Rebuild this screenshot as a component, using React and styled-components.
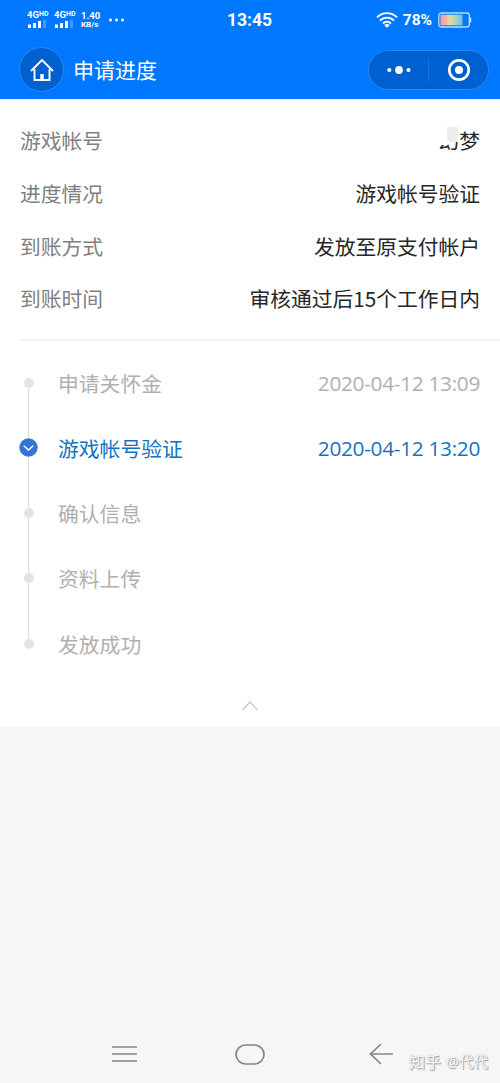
import React from 'react';
import styled, { createGlobalStyle } from 'styled-components';

const GlobalStyle = createGlobalStyle`
  * {
    box-sizing: border-box;
  }

  body {
    margin: 0;
    background: #f6f6f6;
    font-family: "Open Sans", "Noto Sans CJK SC", sans-serif;
  }

  svg {
    display: block;
    flex: none;
  }
`

const StyledPage = styled.div`
  display: flex;
  flex-direction: column;
  width: 500px;
  height: 1083px;
  overflow: hidden;
  background: #f6f6f6;
`

const StyledHeader = styled.header`
  height: 99px;
  color: #fff;
  background: #0077ff;
`

const StyledStatusBar = styled.div`
  display: grid;
  grid-template-columns: 1fr auto 1fr;
  align-items: center;
  height: 40px;
  padding: 0 28px 0 27px;
  font-family: Roboto, sans-serif;
  font-weight: 700;
`

const StyledStatusGroup = styled.div`
  display: flex;
  align-items: center;
  justify-content: ${props => props.$end ? 'flex-end' : 'flex-start'};
`

const StyledSim = styled.div`
  width: 22px;
  margin-right: 5px;
  padding-bottom: 2px;
  font-size: 9.5px;
  line-height: 10px;
  white-space: nowrap;

  small {
    font-size: 7px;
    line-height: 1px;
    vertical-align: 2px;
  }
`

const StyledSpeed = styled.div`
  width: 21px;
  margin-right: 6px;
  font-size: 9.5px;
  line-height: 9px;
  white-space: nowrap;

  div {
    font-size: 8px;
  }
`

const StyledClock = styled.div`
  font-size: 17.5px;
  line-height: 20px;
`

const StyledPercent = styled.div`
  margin: 0 6px 0 5px;
  font-size: 15.5px;
  line-height: 18px;
`

const StyledNav = styled.div`
  display: flex;
  align-items: center;
  height: 59px;
  padding: 0 11px 0 19px;
`

const StyledHome = styled.div`
  display: flex;
  align-items: center;
  justify-content: center;
  width: 45px;
  height: 45px;
  border: 1px solid #288cf8;
  border-radius: 50%;
  background: #0060d0;
`

const StyledTitle = styled.div`
  flex: 1;
  padding-left: 9px;
  font-size: 21px;
  line-height: 30px;
`

const StyledCapsule = styled.div`
  display: flex;
  align-items: center;
  width: 121px;
  height: 40px;
  border: 1px solid #2687f4;
  border-radius: 20px;
  background: #0060d0;
`

const StyledCapsuleButton = styled.div`
  display: flex;
  flex: 1;
  align-items: center;
  justify-content: center;
  height: 24px;

  & + & {
    border-left: 1px solid #1672dc;
  }
`

const StyledPanel = styled.main`
  height: 628px;
  background: #fff;
  border-top: 1px solid #e8effc;
`

const StyledDetails = styled.div`
  height: 241px;
  margin-left: 19px;
  padding: 14px 20px 0 1px;
  border-bottom: 2px solid #f3f3f3;
`

const StyledDetail = styled.div`
  display: flex;
  align-items: center;
  justify-content: space-between;
  height: 52.7px;
  font-family: "Noto Sans CJK SC", sans-serif;
  font-size: 20.75px;
  line-height: 30px;
  color: #808080;
`

const StyledValue = styled.div`
  color: #262626;
`

// Half hidden part of the account name
const StyledMasked = styled.span`
  position: relative;

  &::before,
  &::after {
    content: '';
    position: absolute;
    top: 2px;
  }

  &::before {
    left: -2px;
    width: 12px;
    height: 18px;
    background: #fff;
  }

  &::after {
    left: 9px;
    width: 11px;
    height: 15px;
    background: #ededed;
  }
`

const StyledTimeline = styled.div`
  padding: 9px 20px 0 19px;
`

const StyledStep = styled.div`
  display: flex;
  align-items: center;
  height: 65.25px;
  font-size: 20.8px;
  color: ${props => props.$active ? '#1472c4' : '#b0b0b0'};
`

const StyledRail = styled.div`
  display: flex;
  flex-direction: column;
  align-items: center;
  width: 19px;
  height: 100%;
  margin-right: 20px;
`

const StyledLine = styled.div`
  flex: 1;
  width: 1px;
  background: ${props => props.$hidden ? 'transparent' : '#dcdcdc'};
`

const StyledDot = styled.div`
  width: 10px;
  height: 10px;
  border-radius: 50%;
  background: #e3e3e3;
`

const StyledTime = styled.div`
  margin-left: auto;
  font-size: 20.8px;
  letter-spacing: -0.3px;
`

const StyledCollapse = styled.div`
  display: flex;
  justify-content: center;
  padding-top: 25px;
`

const StyledBottomBar = styled.footer`
  position: relative;
  display: grid;
  grid-template-columns: 125px 125px 138px;
  align-items: center;
  justify-items: center;
  height: 58px;
  margin-top: auto;
  padding-left: 62px;
`

const StyledWatermark = styled.div`
  position: absolute;
  right: 12px;
  bottom: 8px;
  display: flex;
  align-items: center;
  gap: 5px;
  font-size: 14.5px;
  line-height: 26px;
  color: #fbfbfb;
  text-shadow: 1px 1px 1px #999, 0 0 1px #aaa;

  b {
    font-size: 16px;
    font-weight: 400;
  }
`

const steps = [
  { name: '申请关怀金', time: '2020-04-12 13:09' },
  { name: '游戏帐号验证', time: '2020-04-12 13:20', active: true },
  { name: '确认信息' },
  { name: '资料上传' },
  { name: '发放成功' }
];

function Sim() {
  return (
    <StyledSim>
      4G<small>HD</small>
      <svg width="21" height="8" viewBox="0 0 21 8" fill="#fff">
        <rect x="1" y="4.5" width="3" height="3.5" />
        <rect x="6" y="3" width="3" height="5" />
        <rect x="11" y="1" width="3" height="7" />
        <rect x="16" y="0" width="3" height="8" opacity="0.25" />
      </svg>
    </StyledSim>
  );
}

function Wifi() {
  return (
    <svg width="22" height="16" viewBox="0 0 22 16" fill="none" stroke="#fff" strokeWidth="1.9">
      <path d="M1 5.2C7-.3 15-.3 21 5.2" />
      <path d="M4 8.5c4-3.9 10-3.9 14 0" />
      <path d="M7 11.5c2.3-2.3 5.7-2.3 8 0" />
      <path d="M8.2 13c1.6-1.5 4-1.5 5.6 0L11 15.8z" fill="#fff" stroke="none" />
    </svg>
  );
}

function Battery() {
  return (
    <svg width="34" height="16" viewBox="0 0 34 16">
      <defs>
        <linearGradient id="charge">
          <stop offset="0" stopColor="#f3a0b5" />
          <stop offset="0.25" stopColor="#f0b3a5" />
          <stop offset="0.42" stopColor="#e6dc9c" />
          <stop offset="0.65" stopColor="#a9d8b4" />
          <stop offset="1" stopColor="#74bdee" />
        </linearGradient>
      </defs>
      <rect x="0.8" y="1" width="30.5" height="14" rx="2.5" fill="none" stroke="#b8e1f8" strokeWidth="1.3" />
      <rect x="2.5" y="2.7" width="22" height="10.6" fill="url(#charge)" />
      <path d="M32 5.5h1.2v5H32z" fill="#d0edfb" />
    </svg>
  );
}

function App() {
  return (
    <StyledPage>
      <GlobalStyle />

      <StyledHeader>
        <StyledStatusBar>
          <StyledStatusGroup>
            <Sim />
            <Sim />
            <StyledSpeed>
              1.40
              <div>KB/s</div>
            </StyledSpeed>
            <svg width="18" height="4" viewBox="0 0 18 4" fill="#fff">
              <circle cx="2.5" cy="2" r="1.5" />
              <circle cx="8.5" cy="2" r="1.5" />
              <circle cx="14.5" cy="2" r="1.5" />
            </svg>
          </StyledStatusGroup>
          <StyledClock>13:45</StyledClock>
          <StyledStatusGroup $end>
            <Wifi />
            <StyledPercent>78%</StyledPercent>
            <Battery />
          </StyledStatusGroup>
        </StyledStatusBar>

        <StyledNav>
          <StyledHome>
            <svg width="24" height="24" viewBox="0 0 24 24" fill="none" stroke="#fff" strokeWidth="1.9">
              <path d="M1 13 12 2l11 11M4.5 11v11h15V11" />
              <path d="M12 16v6" strokeWidth="3.5" />
            </svg>
          </StyledHome>
          <StyledTitle>申请进度</StyledTitle>
          <StyledCapsule>
            <StyledCapsuleButton>
              <svg width="24" height="8" viewBox="0 0 24 8" fill="#fff">
                <circle cx="2.3" cy="4" r="2.1" />
                <circle cx="12" cy="4" r="3.9" />
                <circle cx="21.5" cy="4" r="2.1" />
              </svg>
            </StyledCapsuleButton>
            <StyledCapsuleButton>
              <svg width="24" height="24" viewBox="0 0 24 24">
                <circle cx="12" cy="12" r="9.7" fill="none" stroke="#fff" strokeWidth="2.7" />
                <circle cx="12" cy="12" r="4" fill="#fff" />
              </svg>
            </StyledCapsuleButton>
          </StyledCapsule>
        </StyledNav>
      </StyledHeader>

      <StyledPanel>
        <StyledDetails>
          <StyledDetail>
            游戏帐号
            <StyledValue><StyledMasked>幻</StyledMasked>梦</StyledValue>
          </StyledDetail>
          <StyledDetail>
            进度情况
            <StyledValue>游戏帐号验证</StyledValue>
          </StyledDetail>
          <StyledDetail>
            到账方式
            <StyledValue>发放至原支付帐户</StyledValue>
          </StyledDetail>
          <StyledDetail>
            到账时间
            <StyledValue>审核通过后15个工作日内</StyledValue>
          </StyledDetail>
        </StyledDetails>

        <StyledTimeline>
          {steps.map((step, i) => {
            return (
              <StyledStep key={step.name} $active={step.active}>
                <StyledRail>
                  <StyledLine $hidden={i === 0} />
                  {step.active ? (
                    <svg width="19" height="19" viewBox="0 0 19 19">
                      <circle cx="9.5" cy="9.5" r="9.2" fill="#3476d6" />
                      <path d="m4.8 7.8 4.7 4.2 4.7-4.2" fill="none" stroke="#fff" strokeWidth="1.4" />
                    </svg>
                  ) : <StyledDot />}
                  <StyledLine $hidden={i === steps.length - 1} />
                </StyledRail>
                {step.name}
                {step.time ? <StyledTime>{step.time}</StyledTime> : null}
              </StyledStep>
            );
          })}
        </StyledTimeline>

        <StyledCollapse>
          <svg width="16" height="10" viewBox="0 0 16 10" fill="none" stroke="#c4c4c4" strokeWidth="1.2">
            <path d="m.5 9 7.5-8 7.5 8" />
          </svg>
        </StyledCollapse>
      </StyledPanel>

      <StyledBottomBar>
        <svg width="25" height="18" viewBox="0 0 25 18" stroke="#858585" strokeWidth="1.7">
          <path d="M0 2h25M0 9h25M0 16h25" />
        </svg>
        <svg width="30" height="21" viewBox="0 0 30 21" fill="none" stroke="#858585" strokeWidth="1.7">
          <rect x="1" y="1" width="28" height="19" rx="9.5" />
        </svg>
        <svg width="24" height="22" viewBox="0 0 24 22" fill="none" stroke="#858585" strokeWidth="1.7">
          <path d="M12 1 1.5 11 12 21M1.5 11H24" />
        </svg>
        <StyledWatermark><b>知乎</b>@代代</StyledWatermark>
      </StyledBottomBar>
    </StyledPage>
  );
}

export default App;
